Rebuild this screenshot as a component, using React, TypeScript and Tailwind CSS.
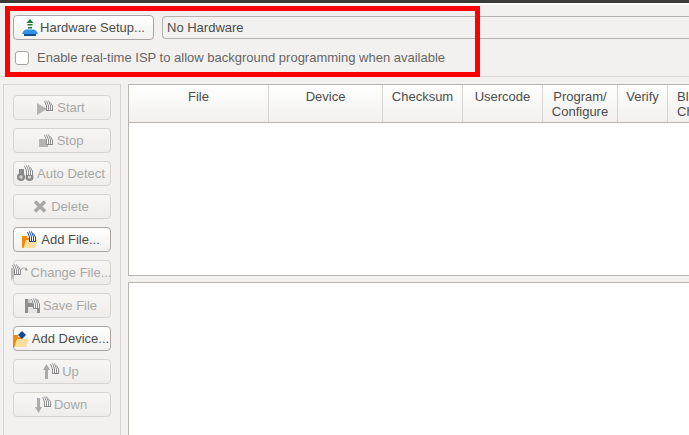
import type { ReactNode } from 'react';

const Grip = ({ x, y, color = '#8a8a8a' }: { x: number; y: number; color?: string }) => (
  <g transform={`translate(${x} ${y})`} fill="none">
    <path d="M0 1H5L7 3H9V10H2V6L0 3Z" fill="#fff" />
    <path d="M0.5 1L2.5 6V10M2.5 0.5L4.5 6V10M4.5 0.5L6.5 6V10M6.5 2.5L8.5 6V10M2 10.5H9" stroke={color} strokeWidth="1" />
  </g>
);

const StartIcon = () => (
  <svg width="17" height="16" viewBox="0 0 17 16" className="shrink-0">
    <path d="M0 3L10 9L0 15Z" fill="#b3b3b3" />
    <Grip x={7} y={0} />
  </svg>
);

const StopIcon = () => (
  <svg width="15" height="14" viewBox="0 0 15 14" className="shrink-0">
    <rect x="0" y="5" width="9" height="8" fill="#b3b3b3" />
    <Grip x={5} y={0} />
  </svg>
);

const DetectIcon = () => (
  <svg width="17" height="17" viewBox="0 0 17 17" className="shrink-0">
    <path d="M2 4H7V10H2ZM9 4H14V10H9Z" fill="#8a8a8a" />
    <circle cx="4" cy="12" r="4" fill="#8a8a8a" />
    <circle cx="12.5" cy="12" r="4" fill="#8a8a8a" />
    <circle cx="4" cy="12" r="1.7" fill="#d4d4d4" />
    <circle cx="12.5" cy="12" r="1.7" fill="#d4d4d4" />
    <Grip x={7} y={0} />
  </svg>
);

const DeleteIcon = () => (
  <svg width="14" height="13" viewBox="0 0 14 13" className="shrink-0">
    <path d="M2 1.5L12 11.5M12 1.5L2 11.5" stroke="#a8a8a8" strokeWidth="3.4" />
  </svg>
);

const FolderIcon = ({ children }: { children?: ReactNode }) => (
  <svg width="16" height="18" viewBox="0 0 16 18" className="shrink-0">
    <path d="M0 5H5V7H9V17H0Z" fill="#f58a0b" />
    <path d="M4 9H16L13 17H1.5Z" fill="#fbdf9c" />
    {children}
  </svg>
);

const ChangeIcon = () => (
  <svg width="17" height="18" viewBox="0 0 17 18" className="shrink-0">
    <path d="M0 4H5V10L0 17Z" fill="#bdbdbd" />
    <Grip x={1} y={0} />
    <path d="M10 6C11 3.5 14 3.5 15 5" fill="none" stroke="#9f9f9f" strokeWidth="1" />
    <path d="M13.5 6.5H17L15.5 3.5Z" fill="#9f9f9f" />
  </svg>
);

const SaveIcon = () => (
  <svg width="15" height="16" viewBox="0 0 15 16" className="shrink-0">
    <path d="M0 1H12L15 4V15H0Z" fill="#8f8f8f" />
    <rect x="3" y="9" width="9" height="6" fill="#e4e4e4" />
    <rect x="3" y="1" width="5" height="4" fill="#d0d0d0" />
    <Grip x={6} y={0} />
  </svg>
);

const UpIcon = () => (
  <svg width="17" height="17" viewBox="0 0 17 17" className="shrink-0">
    <path d="M3.5 1L7 7H5V16H2V7H0Z" fill="#ababab" />
    <Grip x={7} y={0} />
  </svg>
);

const DownIcon = () => (
  <svg width="17" height="17" viewBox="0 0 17 17" className="shrink-0">
    <path d="M3.5 17L7 11H5V2H2V11H0Z" fill="#ababab" />
    <Grip x={7} y={0} />
  </svg>
);

const HardwareIcon = () => (
  <svg width="16" height="17" viewBox="0 0 16 17" className="shrink-0">
    <path d="M8 0L11.5 4H4.5Z" fill="#1d7a3c" />
    <rect x="5.5" y="5" width="5" height="1.5" fill="#1d7a3c" />
    <rect x="6" y="8" width="4" height="1.5" fill="#1d7a3c" />
    <path d="M4 10.5H12C14 11 15.5 13 16 15H0C0.5 13 2 11 4 10.5Z" fill="#2f93e8" />
    <rect x="2" y="15" width="12" height="2" fill="#14508f" />
  </svg>
);

const SideButton = ({
  icon,
  label,
  enabled,
  gap = 'gap-[3px]',
}: {
  icon: ReactNode;
  label: string;
  enabled?: boolean;
  gap?: string;
}) => (
  <div
    className={`h-[25px] w-[98px] pr-[2px] rounded-[4px] border flex items-center justify-center whitespace-nowrap ${gap} ${
      enabled
        ? 'border-[#aaa5a0] bg-gradient-to-b from-white to-[#f2f1f0] text-[#4c4c4c]'
        : 'border-[#d6d3cf] bg-gradient-to-b from-[#f7f6f5] to-[#eeedeb] text-[#a8a8a8]'
    }`}
  >
    {icon}
    <span>{label}</span>
  </div>
);

const columns = [
  { label: 'File', width: 'w-[140px]' },
  { label: 'Device', width: 'w-[114px]' },
  { label: 'Checksum', width: 'w-[80px]' },
  { label: 'Usercode', width: 'w-[80px]' },
  { label: 'Program/ Configure', width: 'w-[75px]' },
  { label: 'Verify', width: 'w-[50px]' },
];

export default function App() {
  return (
    <div className="relative w-[689px] h-[435px] overflow-hidden bg-[#f2f1f0] font-['Liberation_Sans',sans-serif] text-[13px] leading-[15px] text-[#4c4c4c]">
      <div className="h-[3px] bg-[#3c3b37]" />
      <div className="h-[2px] bg-[#fbfbfa]" />

      <div className="pl-[13px] pt-[10px] h-[72px] border-b border-[#d8d5d1]">
        <div className="flex items-center gap-2">
          <div className="h-[25px] w-[141px] shrink-0 rounded-[4px] border border-[#aaa5a0] bg-gradient-to-b from-white to-[#f2f1f0] flex items-center justify-center gap-[2px]">
            <HardwareIcon />
            <span>Hardware Setup...</span>
          </div>
          <div className="h-[23px] flex-1 rounded-l-[4px] border border-r-0 border-[#b6b2ad] bg-[#f2f1f0] pl-[4px] flex items-center">
            No Hardware
          </div>
        </div>
        <div className="mt-[10px] ml-[2px] flex items-center gap-2">
          <div className="w-[14px] h-[14px] rounded-[3px] border border-[#a8a49f] bg-white" />
          <span className="text-[#666]">Enable real-time ISP to allow background programming when available</span>
        </div>
      </div>

      <div className="flex mt-[7px] h-[351px]">
        <div className="ml-[3px] w-[118px] shrink-0 h-full border border-b-0 border-[#d8d5d1] pl-[9px] pt-[10px] flex flex-col gap-2">
          <SideButton icon={<StartIcon />} label="Start" />
          <SideButton icon={<StopIcon />} label="Stop" />
          <SideButton icon={<DetectIcon />} label="Auto Detect" />
          <SideButton icon={<DeleteIcon />} label="Delete" gap="gap-1" />
          <SideButton icon={<FolderIcon><Grip x={5} y={0} color="#1a4a9c" /></FolderIcon>} label="Add File..." enabled />
          <SideButton icon={<ChangeIcon />} label="Change File..." />
          <SideButton icon={<SaveIcon />} label="Save File" />
          <SideButton
            icon={<FolderIcon><path d="M9 1L13 5L9 9L5 5Z" fill="#0f4a9c" /></FolderIcon>}
            label="Add Device..."
            enabled
          />
          <SideButton icon={<UpIcon />} label="Up" gap="gap-[2px]" />
          <SideButton icon={<DownIcon />} label="Down" gap="gap-[2px]" />
        </div>

        <div className="ml-[7px] flex-1 min-w-0 flex flex-col gap-[6px]">
          <div className="h-[192px] border border-r-0 border-[#b9b5b0] bg-white overflow-hidden">
            <div className="h-[38px] flex border-b border-[#b9b5b0] bg-gradient-to-b from-white to-[#f1f0ee]">
              {columns.map((col) => (
                <div
                  key={col.label}
                  className={`${col.width} shrink-0 h-full border-r border-[#d8d5d1] px-1 pt-[4px] text-center`}
                >
                  {col.label}
                </div>
              ))}
              <div className="shrink-0 pl-[9px] pt-[4px] whitespace-nowrap">
                Bl
                <br />
                Ch
              </div>
            </div>
          </div>
          <div className="flex-1 border border-r-0 border-b-0 border-[#b9b5b0] bg-white" />
        </div>
      </div>

      <div className="absolute left-[5px] top-[6px] w-[475px] h-[71px] border-[5px] border-[#ff0000] pointer-events-none" />
    </div>
  );
}
